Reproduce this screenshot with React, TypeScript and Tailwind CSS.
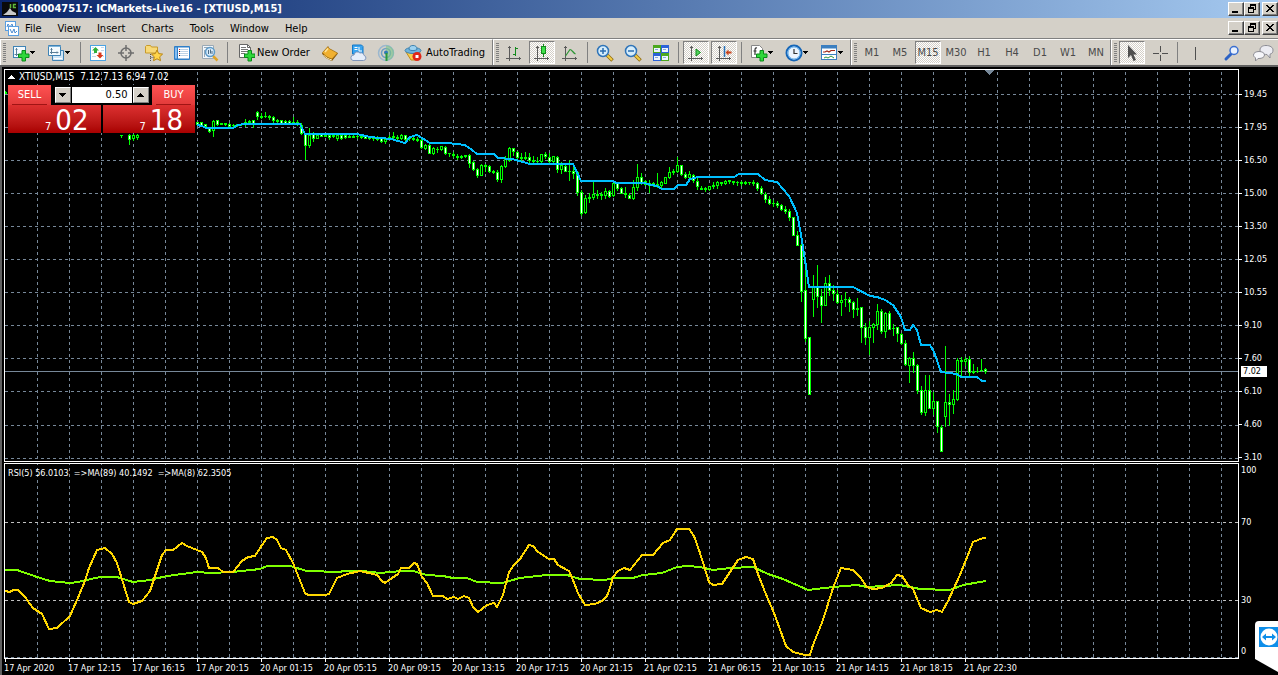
import type { ReactNode } from "react";

type Point = [number, number];
// x, high, body top, body bottom, low, rising
type Candle = [number, number, number, number, number, 0 | 1];

const candles: Candle[] = [
  [5, 91, 92, 93, 93, 0], [121, 135, 135, 135, 137, 0], [129, 134, 135, 139, 144, 0], [133, 134, 135, 138, 140, 1],
  [137, 134, 135, 137, 139, 1],
  [197, 122, 122, 124, 124, 0], [201, 122, 122, 125, 125, 0], [205, 124, 124, 126, 127, 0], [209, 127, 128, 131, 132, 0],
  [213, 120, 121, 130, 136, 1], [217, 120, 120, 124, 125, 0], [221, 123, 123, 124, 124, 0], [225, 123, 123, 124, 125, 0],
  [229, 123, 124, 126, 127, 0], [233, 124, 125, 125, 127, 0], [237, 124, 124, 125, 126, 0], [241, 123, 124, 124, 125, 0],
  [245, 119, 122, 124, 126, 1], [249, 120, 121, 122, 124, 0], [253, 120, 120, 123, 127, 0], [257, 111, 112, 116, 119, 0],
  [261, 113, 116, 117, 118, 0], [265, 112, 116, 116, 117, 0], [269, 115, 116, 117, 119, 0], [273, 116, 117, 120, 122, 0],
  [277, 119, 120, 121, 122, 0], [281, 120, 120, 123, 124, 0], [285, 120, 121, 124, 124, 0], [289, 120, 121, 123, 124, 0],
  [293, 117, 122, 123, 124, 0], [297, 120, 122, 124, 125, 0], [301, 123, 125, 133, 134, 0], [305, 133, 134, 145, 159, 0],
  [309, 128, 135, 145, 147, 1], [313, 132, 134, 138, 141, 0], [317, 135, 135, 138, 138, 1], [321, 133, 134, 136, 136, 0],
  [325, 134, 135, 136, 136, 0], [329, 135, 135, 137, 139, 0], [333, 134, 135, 136, 137, 0], [337, 135, 135, 138, 140, 1],
  [341, 134, 135, 138, 139, 0], [345, 135, 135, 137, 138, 0], [349, 134, 136, 137, 137, 0], [353, 135, 136, 137, 137, 0],
  [357, 135, 136, 136, 138, 0], [361, 136, 136, 137, 138, 0], [365, 135, 136, 138, 138, 0], [369, 137, 137, 138, 139, 0],
  [373, 137, 138, 138, 140, 0], [377, 136, 138, 139, 140, 0], [381, 137, 138, 141, 142, 0], [385, 138, 139, 141, 143, 1],
  [389, 135, 137, 138, 139, 0], [393, 132, 136, 137, 139, 0], [397, 135, 137, 138, 139, 0], [401, 134, 135, 138, 139, 1],
  [405, 135, 135, 139, 140, 0], [409, 137, 138, 138, 140, 0], [413, 137, 138, 139, 140, 0], [417, 137, 139, 140, 141, 0],
  [421, 138, 140, 147, 148, 0], [425, 144, 145, 148, 149, 1], [429, 144, 145, 153, 153, 0], [433, 147, 148, 153, 154, 1],
  [437, 147, 149, 149, 152, 0], [441, 146, 146, 149, 150, 1], [445, 146, 147, 153, 154, 0], [449, 153, 153, 153, 156, 0],
  [453, 152, 154, 155, 157, 0], [457, 154, 156, 157, 159, 0], [461, 155, 156, 157, 158, 0], [465, 155, 155, 156, 157, 0],
  [469, 154, 155, 163, 167, 0], [473, 161, 162, 169, 170, 0], [477, 168, 169, 175, 177, 0], [481, 164, 165, 175, 175, 1],
  [485, 164, 165, 166, 171, 0], [489, 165, 166, 171, 172, 0], [493, 170, 171, 172, 173, 0], [497, 170, 172, 179, 181, 0],
  [501, 165, 166, 179, 182, 1], [505, 156, 159, 166, 167, 1], [509, 147, 148, 160, 161, 1], [513, 148, 148, 151, 155, 0],
  [517, 151, 152, 157, 159, 0], [521, 153, 157, 158, 160, 0], [525, 152, 157, 158, 159, 0], [529, 153, 157, 160, 162, 0],
  [533, 156, 160, 161, 162, 0], [537, 157, 161, 161, 163, 0], [541, 154, 154, 161, 162, 1], [545, 152, 154, 156, 158, 0],
  [549, 153, 157, 161, 162, 0], [553, 156, 156, 161, 162, 1], [557, 156, 157, 169, 172, 0], [561, 162, 165, 169, 173, 1],
  [565, 164, 166, 171, 171, 0], [569, 160, 171, 171, 180, 0], [573, 166, 171, 173, 178, 0], [577, 171, 172, 192, 195, 0],
  [581, 190, 192, 213, 215, 0], [585, 195, 198, 212, 213, 1], [589, 193, 197, 198, 202, 0], [593, 181, 194, 197, 199, 1],
  [597, 190, 194, 195, 198, 0], [601, 192, 194, 195, 199, 0], [605, 188, 191, 195, 198, 1], [609, 190, 191, 196, 197, 0],
  [613, 183, 183, 195, 196, 1], [617, 182, 183, 188, 190, 0], [621, 187, 188, 193, 193, 0], [625, 187, 193, 194, 197, 0],
  [629, 193, 195, 198, 198, 0], [633, 180, 187, 198, 199, 1], [637, 164, 177, 187, 190, 1], [641, 173, 177, 182, 184, 0],
  [645, 180, 181, 184, 185, 0], [649, 180, 183, 185, 192, 0], [653, 182, 183, 184, 186, 0], [657, 173, 184, 185, 187, 0],
  [661, 181, 182, 185, 187, 1], [665, 177, 177, 183, 183, 1], [669, 167, 172, 177, 178, 1], [673, 169, 171, 172, 174, 0],
  [677, 157, 165, 171, 172, 1], [681, 165, 165, 174, 175, 0], [685, 172, 174, 177, 178, 0], [689, 171, 174, 177, 178, 1],
  [693, 174, 175, 180, 182, 0], [697, 177, 181, 186, 189, 0], [701, 186, 188, 189, 189, 0], [705, 187, 188, 189, 191, 0],
  [709, 186, 186, 189, 190, 1], [713, 182, 185, 186, 188, 0], [717, 181, 182, 185, 188, 1], [721, 182, 182, 183, 185, 0],
  [725, 180, 181, 183, 184, 1], [729, 180, 180, 181, 183, 0], [733, 181, 181, 182, 184, 0], [737, 181, 182, 182, 185, 0],
  [741, 181, 182, 183, 185, 0], [745, 181, 182, 183, 184, 0], [749, 182, 182, 182, 184, 0], [753, 180, 182, 183, 185, 0],
  [757, 182, 183, 188, 190, 0], [761, 186, 188, 193, 194, 0], [765, 192, 194, 199, 202, 0], [769, 196, 199, 203, 204, 0],
  [773, 200, 203, 203, 206, 0], [777, 201, 203, 205, 207, 0], [781, 204, 205, 209, 210, 0], [785, 206, 209, 211, 213, 0],
  [789, 209, 211, 217, 220, 0], [793, 217, 217, 235, 235, 0], [797, 231, 235, 245, 245, 0], [801, 244, 245, 291, 301, 0],
  [805, 266, 290, 338, 341, 0], [809, 337, 337, 394, 394, 0], [813, 275, 287, 299, 316, 1], [817, 265, 287, 296, 307, 0],
  [821, 289, 296, 305, 322, 0], [825, 277, 283, 305, 305, 1], [829, 275, 283, 290, 295, 0], [833, 285, 290, 293, 300, 0],
  [837, 290, 294, 302, 303, 0], [841, 295, 300, 302, 315, 1], [845, 292, 299, 299, 306, 0], [849, 297, 299, 302, 311, 0],
  [853, 301, 302, 309, 317, 0], [857, 298, 308, 309, 315, 0], [861, 307, 307, 327, 342, 0], [865, 323, 327, 337, 344, 0],
  [869, 321, 327, 337, 354, 1], [873, 323, 324, 327, 342, 1], [877, 304, 311, 324, 329, 1], [881, 309, 311, 331, 333, 0],
  [885, 312, 313, 331, 337, 1], [889, 311, 313, 329, 329, 0], [893, 324, 328, 328, 335, 0], [897, 327, 327, 333, 341, 0],
  [901, 333, 334, 343, 344, 0], [905, 340, 343, 364, 365, 0], [909, 357, 358, 365, 382, 1], [913, 352, 358, 365, 372, 0],
  [917, 364, 365, 390, 393, 0], [921, 386, 390, 412, 414, 0], [925, 375, 390, 412, 415, 1], [929, 375, 390, 408, 408, 0],
  [933, 392, 401, 408, 414, 1], [937, 401, 401, 426, 432, 0], [941, 425, 427, 451, 451, 0], [945, 346, 402, 416, 426, 1],
  [949, 394, 402, 404, 425, 0], [953, 390, 399, 404, 413, 1], [957, 358, 360, 399, 400, 1], [961, 357, 360, 361, 375, 0],
  [965, 357, 359, 361, 365, 1], [969, 356, 359, 372, 376, 0], [973, 364, 371, 372, 373, 0], [977, 367, 371, 371, 372, 0],
  [981, 359, 370, 370, 371, 0], [985, 368, 369, 371, 373, 0],
];

const averageLine: Point[] = [
  [197, 125], [202, 126], [206, 128], [233, 128], [238, 125], [244, 124], [300, 124], [305, 134], [357, 134], [370, 137],
  [391, 139], [405, 143], [410, 137], [417, 135], [430, 143], [447, 143], [465, 145], [472, 150], [477, 154], [494, 154],
  [498, 158], [512, 159], [523, 162], [530, 164], [573, 164], [581, 181], [613, 181], [616, 183], [645, 183], [647, 184],
  [657, 186], [662, 189], [674, 189], [678, 185], [686, 185], [690, 179], [698, 177], [734, 177], [739, 174], [758, 174],
  [765, 180], [777, 182], [789, 196], [797, 213], [801, 235], [805, 260], [809, 287], [853, 287], [870, 296], [877, 297],
  [885, 300], [893, 305], [901, 317], [905, 330], [910, 330], [913, 325], [917, 330], [921, 345], [930, 345], [934, 352],
  [941, 372], [957, 374], [961, 377], [977, 377], [982, 381], [986, 381],
];

const slowRsi: Point[] = [
  [5, 570], [17, 570], [37, 577], [50, 581], [70, 583], [78, 582], [100, 577], [117, 577], [133, 582], [150, 580],
  [167, 576], [197, 572], [210, 573], [233, 572], [260, 569], [267, 566], [290, 566], [307, 571], [340, 572], [343, 571],
  [363, 571], [380, 573], [390, 572], [403, 571], [413, 571], [427, 575], [443, 576], [453, 578], [467, 578], [477, 582],
  [502, 583], [520, 578], [547, 575], [567, 575], [580, 579], [605, 580], [613, 578], [633, 578], [643, 575], [662, 573],
  [677, 567], [687, 566], [700, 567], [713, 570], [730, 568], [753, 567], [768, 574], [783, 579], [808, 590], [833, 587],
  [857, 585], [867, 587], [883, 586], [900, 585], [920, 589], [950, 590], [963, 585], [986, 581],
];

const fastRsi: Point[] = [
  [5, 591], [10, 592], [13, 590], [18, 590], [25, 597], [33, 608], [42, 614], [49, 629], [57, 628], [70, 616],
  [77, 600], [85, 581], [89, 568], [97, 550], [105, 548], [112, 554], [117, 563], [129, 602], [133, 604], [142, 601],
  [150, 591], [157, 570], [162, 555], [166, 550], [173, 550], [182, 543], [187, 546], [202, 552], [206, 558], [209, 568],
  [218, 568], [223, 572], [233, 572], [242, 561], [248, 557], [255, 556], [262, 545], [267, 538], [273, 537], [277, 540],
  [281, 548], [286, 550], [293, 563], [305, 593], [308, 595], [325, 595], [329, 594], [337, 578], [347, 574], [360, 571],
  [377, 575], [382, 581], [385, 583], [392, 578], [398, 574], [401, 568], [409, 568], [414, 563], [417, 564], [422, 577],
  [427, 583], [433, 596], [443, 596], [447, 599], [454, 597], [458, 599], [464, 596], [469, 598], [473, 607], [478, 612],
  [487, 605], [494, 603], [497, 607], [503, 595], [509, 572], [514, 565], [520, 559], [529, 545], [533, 546], [538, 552],
  [549, 559], [554, 559], [558, 565], [569, 571], [573, 580], [578, 593], [585, 605], [595, 604], [602, 601], [607, 596],
  [610, 588], [613, 577], [618, 571], [624, 568], [630, 570], [642, 555], [653, 555], [663, 543], [670, 540], [677, 529],
  [689, 529], [694, 536], [700, 553], [709, 582], [713, 585], [722, 584], [738, 560], [746, 557], [753, 559], [758, 574],
  [765, 592], [774, 613], [786, 646], [793, 652], [805, 655], [810, 655], [813, 645], [823, 620], [833, 588], [841, 568],
  [853, 570], [860, 577], [867, 587], [873, 589], [882, 588], [891, 583], [897, 575], [902, 576], [908, 585], [913, 589],
  [921, 608], [930, 612], [937, 610], [942, 612], [948, 601], [960, 575], [973, 542], [983, 538], [986, 538],
];

const priceRows = [94, 127, 160, 193, 226, 259, 292, 325, 358, 391, 425, 458];
const prices = ["19.45", "17.95", "16.50", "15.00", "13.50", "12.05", "10.55", "9.10", "7.60", "6.10", "4.60", "3.10"];
const gridColumns = Array.from({ length: 60 }, (_, i) => 37 + i * 32);
const times = [
  "17 Apr 2020", "17 Apr 12:15", "17 Apr 16:15", "17 Apr 20:15", "20 Apr 01:15", "20 Apr 05:15", "20 Apr 09:15", "20 Apr 13:15",
  "20 Apr 17:15", "20 Apr 21:15", "21 Apr 02:15", "21 Apr 06:15", "21 Apr 10:15", "21 Apr 14:15", "21 Apr 18:15", "21 Apr 22:30",
];
const menus = ["File", "View", "Insert", "Charts", "Tools", "Window", "Help"];
const periods = ["M1", "M5", "M15", "M30", "H1", "H4", "D1", "W1", "MN"];

const toPoints = (points: Point[]) => points.map((p) => p.join(",")).join(" ");

/* ---------- Icons ---------- */

function Icon({ children, crisp = false }: { children: ReactNode; crisp?: boolean }) {
  return (
    <svg
      viewBox="0 0 18 18"
      className="h-[18px] w-[18px] shrink-0"
      fill="none"
      shapeRendering={crisp ? "crispEdges" : undefined}
      aria-hidden="true"
    >
      {children}
    </svg>
  );
}

function GreenPlus({ x, y }: { x: number; y: number }) {
  return (
    <path
      transform={`translate(${x} ${y})`}
      d="M4 .5h3.500V4H11v3.500H7.500V11H4V7.500H.5V4H4z"
      fill="#2fd83a"
      stroke="#0b8a1a"
    />
  );
}

function NewChartIcon() {
  return (
    <Icon>
      <rect x="1.500" y="2.500" width="12" height="11" fill="#f4fbff" stroke="#3f83b5" />
      <path d="M4.500 4v8M2.500 10.500h9M3.500 5.500l1-1 1 1M10.500 9.500l1 1" stroke="#5b7f98" />
      <GreenPlus x={6} y={6} />
    </Icon>
  );
}

function ProfilesIcon() {
  return (
    <Icon>
      <path d="M5.500 6.500h11v10h-11z" fill="#cfe6f7" stroke="#3f83b5" />
      <path d="M1.500 1.500h12v10h-12z" fill="#f4fbff" stroke="#3f83b5" />
      <path d="M1.500 2.500h12" stroke="#7db4dc" />
      <path d="M4.500 4v6M3 8.500h8M10 7.500l1 1-1 1M3.500 5.500l1-1 1 1" stroke="#5b7f98" />
      <path d="M7 14.500h8" stroke="#fff" />
    </Icon>
  );
}

function MarketWatchIcon() {
  return (
    <Icon>
      <rect x="1.500" y="1.500" width="15" height="15" fill="#fff" stroke="#4ba3e3" />
      <path d="M3 3.500h2M12 3.500h3M12 6.500h3M3 9.500h3M3 12.500h4M14 12.500h1" stroke="#c5d8e8" />
      <path d="M6.500 3l3.500 3.500H8V9H5V6.500H3z" fill="#2fae3a" />
      <path d="M11 14.500L7.500 11h2V8.500h3V11h2z" fill="#d9391c" />
    </Icon>
  );
}

function DataWindowIcon() {
  return (
    <Icon>
      <circle cx="9" cy="9" r="5" stroke="#6e6e6e" strokeWidth="1.500" />
      <path d="M9 1v6M9 11v6M1 9h6M11 9h6" stroke="#6e6e6e" strokeWidth="1.500" />
    </Icon>
  );
}

function NavigatorIcon() {
  return (
    <Icon>
      <path d="M.5 2.500l1-1h4l1 1.500h6v6H.5z" fill="#f8d978" stroke="#c79a2b" />
      <path d="M5.500 10v7M5.500 13.500h4" stroke="#555" strokeDasharray="1 1" />
      <path d="M12 6l1.700 3.600 3.900.5-2.900 2.700.8 3.900-3.500-1.900-3.500 1.900.8-3.900-2.900-2.700 3.900-.5z" fill="#ffd54a" stroke="#b98512" />
    </Icon>
  );
}

function TerminalIcon() {
  return (
    <Icon>
      <rect x="1" y="2" width="16" height="14" rx="1" fill="#2f7fc8" />
      <path d="M5 3.500h11v11H5z" fill="#fff" />
      <path d="M2 3.500h2v11H2z" fill="#86bdf0" />
      <path d="M7 5.500h8M7 7.500h8M7 9.500h8M7 11.500h8" stroke="#bcd2e6" />
      <path d="M6 5.500h1M6 9.500h1" stroke="#d33" />
      <path d="M6 7.500h1M6 11.500h1" stroke="#222" />
    </Icon>
  );
}

function TesterIcon() {
  return (
    <Icon>
      <path d="M1.500 1.500h11v13h-11z" fill="#f2f7fb" stroke="#9aa9b5" />
      <path d="M3 3.500h8M3.500 6v7" stroke="#9aa9b5" />
      <path d="M12 12l4.500 4.500" stroke="#e0a526" strokeWidth="2.500" />
      <circle cx="9" cy="8" r="4.500" fill="#d7ebfa" stroke="#5f9bc8" strokeWidth="1.500" />
      <path d="M7.500 6v4M9.500 5.500v4M11 7v3" stroke="#4a6b85" />
    </Icon>
  );
}

function NewOrderIcon() {
  return (
    <Icon>
      <path d="M2.500.5h8l3 3v10h-11z" fill="#fff" stroke="#666" />
      <path d="M10.500.5v3h3" stroke="#666" />
      <path d="M4 3.500h5M4 5.500h7M4 7.500h7M4 9.500h4" stroke="#777" />
      <GreenPlus x={7} y={6} />
    </Icon>
  );
}

function BookIcon() {
  return (
    <Icon>
      <path d="M1 9.500L7 2.500c.5 1.500 1.500 2.500 3 3l7 4-6 7.500C7 15.500 3 13.500 1 9.500z" fill="#8a5a0a" />
      <path d="M1.500 8.500L7 2.500c.5 1.500 1.500 2.500 3 3l6.500 3.500-5.500 6C7 14 3.500 12 1.500 8.500z" fill="#f0b030" stroke="#9a6a10" strokeWidth=".6" />
      <path d="M2.500 11c2.500 3 5 4 8.500 5" stroke="#fff0b8" />
      <path d="M7 4.500L4 8" stroke="#ffe49a" strokeWidth="1.500" />
    </Icon>
  );
}

function CloudIcon() {
  return (
    <Icon>
      <path d="M3.500 1h9l1.500 1.500V10H3.500z" fill="#3aa5f0" stroke="#1379c8" />
      <path d="M5.500 3.500h3M5.500 5.500h3M10 3v4h3" stroke="#fff" />
      <path d="M4 16.500h10.500a2.600 2.600 0 0 0 .5-5.100A3 3 0 0 0 11 9a3.500 3.500 0 0 0-6 2 2.800 2.800 0 0 0-1 5.500z" fill="#e6eefa" stroke="#7f95bb" />
    </Icon>
  );
}

function SignalIcon() {
  return (
    <Icon>
      <circle cx="9" cy="9" r="7.500" stroke="#9ab7cf" strokeWidth="1.500" />
      <circle cx="9" cy="9" r="4.500" stroke="#6f9fc4" strokeWidth="1.500" />
      <path d="M9 1.500a7.500 7.500 0 0 1 1 15L9 9z" fill="#7cc48a" fillOpacity=".6" />
      <circle cx="9" cy="8.500" r="2" fill="#2f7ab8" />
      <path d="M9.500 9v8" stroke="#2a9a3c" strokeWidth="2" />
    </Icon>
  );
}

function AutoTradingIcon() {
  return (
    <Icon>
      <path d="M2 8h14l-3 8H7z" fill="#f7cf4c" stroke="#c08a18" />
      <ellipse cx="9" cy="6.500" rx="8" ry="3" fill="#6fb4dd" stroke="#3d82b0" />
      <path d="M5 5.500C5 2.500 6.500 1.500 9 1.500s4 1 4 4c-2 1.500-6 1.500-8 0z" fill="#9dd2f0" stroke="#3d82b0" />
      <circle cx="13" cy="12.500" r="4.500" fill="#e02818" />
      <path d="M11.500 11h3v3h-3z" fill="#fff" />
    </Icon>
  );
}

function Axes() {
  return <path d="M4.500 2v15M1 14.500h15M3 3.500h3M14.500 13v3" stroke="#5a5a5a" />;
}

function BarsIcon() {
  return (
    <Icon crisp>
      <Axes />
      <path d="M10.500 3v9M8 10.500h2M11 4.500h2" stroke="#138a1c" />
    </Icon>
  );
}

function CandlesIcon() {
  return (
    <Icon crisp>
      <Axes />
      <path d="M10.500 0v13" stroke="#138a1c" />
      <rect x="8.500" y="2.500" width="4" height="7" fill="#3fe04a" stroke="#138a1c" />
    </Icon>
  );
}

function LineIcon() {
  return (
    <Icon>
      <Axes />
      <path d="M4.500 12L9 5.500c2 0 3 3.500 5.500 4.500" stroke="#2d9636" strokeWidth="1.200" />
    </Icon>
  );
}

function ZoomIcon({ plus = false }: { plus?: boolean }) {
  return (
    <Icon>
      <path d="M11 11l5.500 5.500" stroke="#8f6a12" strokeWidth="3.500" />
      <path d="M11 11l5 5" stroke="#f3cc42" strokeWidth="2" />
      <circle cx="7" cy="7" r="5.500" fill="#d6edfb" stroke="#2f74b8" strokeWidth="1.500" />
      <path d={plus ? "M4 7h6M7 4v6" : "M4 7h6"} stroke="#2a6cb0" strokeWidth="1.500" />
    </Icon>
  );
}

function TileIcon() {
  return (
    <Icon crisp>
      <path d="M1 1h8v8H1z" fill="#4ba81e" />
      <path d="M9 1h8v8H9z" fill="#2b62d9" />
      <path d="M1 9h8v8H1z" fill="#2b62d9" />
      <path d="M9 9h8v8H9z" fill="#4ba81e" />
      <path d="M2 4h6v4H2zM10 4h6v4h-6zM2 12h6v4H2zM10 12h6v4h-6z" fill="#eef6ff" />
      <path d="M3 5.500h3M11 5.500h3M3 13.500h3M11 13.500h3" stroke="#8aa9d8" />
    </Icon>
  );
}

function AutoScrollIcon() {
  return (
    <Icon>
      <Axes />
      <path d="M9 5v7l4.500-3.500z" fill="#4fd45a" stroke="#138a1c" />
    </Icon>
  );
}

function ShiftIcon() {
  return (
    <Icon>
      <Axes />
      <path d="M9.500 2v11" stroke="#2a72b8" strokeWidth="1.500" />
      <path d="M10.500 8.500l3-3v2h3v2h-3v2z" fill="#c8421a" />
    </Icon>
  );
}

function IndicatorsIcon() {
  return (
    <Icon>
      <path d="M1.500 1.500h8l3 3v9h-11z" fill="#fff" stroke="#888" />
      <path d="M7 4c-2-.5-2 1-2 3v4M3.500 7h3" stroke="#333" strokeWidth="1.200" />
      <GreenPlus x={6} y={6} />
    </Icon>
  );
}

function ClockIcon() {
  return (
    <Icon>
      <circle cx="9" cy="9" r="7.500" fill="#eaf4fd" stroke="#1566b8" strokeWidth="2" />
      <circle cx="9" cy="9" r="6" stroke="#6db4ee" />
      <path d="M9 5v4.500h3.500" stroke="#333" strokeWidth="1.200" />
    </Icon>
  );
}

function TemplateIcon() {
  return (
    <Icon>
      <rect x="1.500" y="1.500" width="15" height="14" fill="#fff" stroke="#3b7fc0" />
      <path d="M1.500 3h15" stroke="#3b7fc0" strokeWidth="3" />
      <path d="M3 8h2l2-1 2 1 2-1.500h4" stroke="#a12a1a" strokeWidth="1.200" />
      <path d="M2 10.500h14" stroke="#3b7fc0" />
      <path d="M4 14l2-1 2 1 3-2 3 2" stroke="#2f9a38" />
    </Icon>
  );
}

function PointerIcon() {
  return (
    <Icon>
      <path d="M5 1v13l3-3 2.500 6 2.500-1-2.500-5.500H14z" fill="#4f4f4f" />
    </Icon>
  );
}

function CrossIcon() {
  return (
    <Icon crisp>
      <path d="M9.500 2v6M9.500 11v6M2 9.500h6M11 9.500h6" stroke="#4f4f4f" />
    </Icon>
  );
}

function VerticalLineIcon() {
  return (
    <Icon crisp>
      <path d="M9.500 3v13" stroke="#4f4f4f" />
    </Icon>
  );
}

function SearchIcon() {
  return (
    <Icon>
      <path d="M3 15l5-5" stroke="#2c62c4" strokeWidth="3" strokeLinecap="round" />
      <circle cx="11" cy="6.500" r="4" fill="#e9f1fd" stroke="#3b6fd0" strokeWidth="1.500" />
    </Icon>
  );
}

function ChatIcon() {
  return (
    <svg viewBox="0 0 22 18" className="h-[18px] w-[22px] shrink-0" aria-hidden="true">
      <path d="M14 1.500c4 0 7 1.800 7 4.500s-1 3.500-3 4.200V14l-3-3.500c-4 0-7-1.500-7-4.500s2.500-4.500 6-4.500z" fill="#ececf2" stroke="#8c8c94" />
      <path d="M7 7.500c3 0 5.500 1.300 5.500 3.500S10 14.500 7 14.500H6L3.500 17v-3.200C2 13 1.500 12 1.500 11c0-2.200 2.500-3.500 5.500-3.500z" fill="#f6f6fa" stroke="#8c8c94" />
    </svg>
  );
}

/* ---------- Window chrome ---------- */

function WindowButtons() {
  const box =
    "flex h-[14px] w-4 items-center justify-center border border-t-white border-l-white border-r-[#404040] border-b-[#404040] bg-[#d4d0c8] shadow-[inset_-1px_-1px_0_#808080]";
  return (
    <div className="flex items-center">
      <button type="button" aria-label="Minimize" className={box}>
        <svg viewBox="0 0 12 10" className="h-[10px] w-3" shapeRendering="crispEdges">
          <path d="M2 7h6v2H2z" />
        </svg>
      </button>
      <button type="button" aria-label="Restore" className={box}>
        <svg viewBox="0 0 12 10" className="h-[10px] w-3" shapeRendering="crispEdges">
          <path d="M4 0h6v6H8V5h1V2H5v1H4zM2 3h6v6H2zM3 5v3h4V5z" fillRule="evenodd" />
        </svg>
      </button>
      <button type="button" aria-label="Close" className={`ml-0.5 ${box}`}>
        <svg viewBox="0 0 12 10" className="h-[10px] w-3" shapeRendering="crispEdges">
          <path d="M2 1h2v1h1v1h2V2h1V1h2v1H9v1H8v1H7v1h1v1h1v1h1v1H8V7H7V6H5v1H4v1H2V7h1V6h1V5h1V4H4V3H3V2H2z" />
        </svg>
      </button>
    </div>
  );
}

function TitleBar() {
  return (
    <header className="flex h-[18px] items-center bg-gradient-to-r from-[#0a246a] to-[#a6caf0] pl-0.5">
      <svg viewBox="0 0 16 16" className="h-4 w-4" aria-hidden="true">
        <path d="M0 1h16v14H0z" fill="#0a0a0a" />
        <path d="M1 14l4-3 3-4 2 3 4 2v2z" fill="#c9c9c9" />
        <path d="M8.500 3v4M14 3.500h-2.500v3H14" fill="none" stroke="#5fb63a" strokeWidth="1.500" />
      </svg>
      <h1 className="flex-1 pl-0.5 text-[11px] leading-4 font-bold whitespace-nowrap text-white">
        1600047517: ICMarkets-Live16 - [XTIUSD,M15]
      </h1>
      <WindowButtons />
    </header>
  );
}

function MenuBar() {
  return (
    <nav className="flex h-[21px] items-center border-b border-[#808080] pl-1">
      <svg viewBox="0 0 15 15" className="h-[15px] w-[15px]" fill="none" aria-hidden="true">
        <rect x="1.500" y=".5" width="10" height="9" fill="#fff" stroke="#5a9ee0" />
        <path d="M3 6l1-3 2 3 2-3 1 3" stroke="#4a8ad0" />
        <rect x="4.500" y="5.500" width="10" height="9" fill="#fff" stroke="#5a9ee0" />
        <path d="M6 8l2 4 2-4 1 4 2-2" stroke="#4a8ad0" />
      </svg>
      <div className="flex flex-1 pt-px">
        {menus.map((menu) => (
          <button key={menu} type="button" className="pr-2.5 pl-1.5 text-[11px] leading-4">
            {menu}
          </button>
        ))}
      </div>
      <WindowButtons />
    </nav>
  );
}

function ToolButton({
  label,
  pressed = false,
  children,
}: {
  label: string;
  pressed?: boolean;
  children: ReactNode;
}) {
  return (
    <button
      type="button"
      aria-label={label}
      aria-pressed={pressed}
      className={`mx-px flex h-[23px] w-[26px] shrink-0 items-center justify-center border text-[11px] text-[#4a4a4a] ${
        pressed
          ? "border-t-[#808080] border-r-white border-b-white border-l-[#808080] bg-[repeating-conic-gradient(#fff_0_25%,#d4d0c8_0_50%)] bg-[length:2px_2px]"
          : "border-transparent"
      }`}
    >
      {children}
    </button>
  );
}

function DropButton({ label, children }: { label: string; children: ReactNode }) {
  return (
    <button type="button" aria-label={label} aria-haspopup="menu" className="flex h-[23px] w-[35px] shrink-0 items-center pl-[5px]">
      {children}
      <svg viewBox="0 0 5 3" className="h-[3px] w-[5px]" shapeRendering="crispEdges">
        <path d="M0 0h5v1H4v1H3v1H2V2H1V1H0z" />
      </svg>
    </button>
  );
}

function Grip() {
  return (
    <span className="mr-px ml-0.5 h-[19px] w-[3px] shrink-0 bg-[repeating-linear-gradient(#808080_0_1px,#d4d0c8_1px_2px)]" />
  );
}

function Separator() {
  return <span className="mx-[3px] h-[21px] w-px shrink-0 bg-[#808080]" />;
}

function Band({ children, grow = false }: { children: ReactNode; grow?: boolean }) {
  return (
    <div
      className={`flex items-center border-t border-l border-white ${
        grow ? "flex-1" : "shrink-0 border-r border-r-[#808080]"
      }`}
    >
      <Grip />
      {children}
    </div>
  );
}

function Toolbar() {
  return (
    <div className="flex h-[26px]" role="toolbar">
      <Band>
        <DropButton label="New chart"><NewChartIcon /></DropButton>
        <DropButton label="Profiles"><ProfilesIcon /></DropButton>
        <Separator />
        <ToolButton label="Market Watch"><MarketWatchIcon /></ToolButton>
        <ToolButton label="Data Window"><DataWindowIcon /></ToolButton>
        <ToolButton label="Navigator"><NavigatorIcon /></ToolButton>
        <ToolButton label="Terminal"><TerminalIcon /></ToolButton>
        <ToolButton label="Strategy Tester"><TesterIcon /></ToolButton>
        <Separator />
        <button type="button" className="ml-1.5 flex w-[79px] shrink-0 items-center gap-0.5 text-[11px] whitespace-nowrap">
          <NewOrderIcon />
          <span className="pt-px">New Order</span>
        </button>
        <ToolButton label="MetaEditor"><BookIcon /></ToolButton>
        <ToolButton label="Hosting"><CloudIcon /></ToolButton>
        <ToolButton label="Signals"><SignalIcon /></ToolButton>
        <button type="button" className="ml-1 flex w-[88px] shrink-0 items-center gap-1 text-[11px] whitespace-nowrap">
          <AutoTradingIcon />
          <span className="pt-px">AutoTrading</span>
        </button>
      </Band>
      <Band>
        <ToolButton label="Bar chart"><BarsIcon /></ToolButton>
        <ToolButton label="Candlesticks" pressed><CandlesIcon /></ToolButton>
        <ToolButton label="Line chart"><LineIcon /></ToolButton>
        <Separator />
        <ToolButton label="Zoom in"><ZoomIcon plus /></ToolButton>
        <ToolButton label="Zoom out"><ZoomIcon /></ToolButton>
        <ToolButton label="Tile windows"><TileIcon /></ToolButton>
        <Separator />
        <ToolButton label="Auto scroll" pressed><AutoScrollIcon /></ToolButton>
        <ToolButton label="Chart shift" pressed><ShiftIcon /></ToolButton>
        <Separator />
        <DropButton label="Indicators"><IndicatorsIcon /></DropButton>
        <DropButton label="Periods"><ClockIcon /></DropButton>
        <DropButton label="Templates"><TemplateIcon /></DropButton>
      </Band>
      <Band>
        {periods.map((period) => (
          <ToolButton key={period} label={period} pressed={period === "M15"}>
            <span className="pt-0.5">{period}</span>
          </ToolButton>
        ))}
      </Band>
      <Band grow>
        <ToolButton label="Cursor" pressed><PointerIcon /></ToolButton>
        <ToolButton label="Crosshair"><CrossIcon /></ToolButton>
        <Separator />
        <ToolButton label="Vertical line"><VerticalLineIcon /></ToolButton>
        <span className="flex-1" />
        <ToolButton label="Search"><SearchIcon /></ToolButton>
        <button type="button" aria-label="Community" className="mr-1 ml-1.5 shrink-0"><ChatIcon /></button>
      </Band>
    </div>
  );
}

/* ---------- Chart ---------- */

function GridLines({ rows, levels = [] }: { rows: number[]; levels?: number[] }) {
  return (
    <g strokeDasharray="3 3" stroke="#778899">
      {gridColumns.map((x) => (
        <line key={x} x1={x + 0.5} x2={x + 0.5} y1="0" y2="700" />
      ))}
      {rows.map((y) => (
        <line key={y} x1="5" x2="3000" y1={y + 0.5} y2={y + 0.5} />
      ))}
      {levels.map((y) => (
        <line key={y} x1="5" x2="3000" y1={y + 0.5} y2={y + 0.5} stroke="#c0c0c0" />
      ))}
    </g>
  );
}

function CandleShape({ candle }: { candle: Candle }) {
  const [x, high, top, bottom, low, rising] = candle;
  return (
    <g>
      <rect x={x} y={high} width="1" height={low - high + 1} fill="#00ff00" />
      <rect x={x - 1} y={top} width="3" height={bottom - top + 1} fill="#00ff00" />
      {bottom - top > 1 && (
        <rect x={x} y={top + 1} width="1" height={bottom - top - 1} fill={rising ? "#000000" : "#ffffff"} />
      )}
    </g>
  );
}

function TradePanel() {
  const spin = "flex h-4 w-4 items-center justify-center border border-t-white border-l-white border-[#808080] bg-[#d4d0c8]";
  const side = "h-5 w-[43px] bg-gradient-to-b from-[#ff5252] to-[#e23a3a] px-1 text-[11px] leading-[19px] text-white";
  const price = "flex h-7 flex-1 items-end justify-end bg-gradient-to-b from-[#dd3030] to-[#a80000] text-white";
  return (
    <div className="absolute top-[15px] left-[3px] w-[187px] bg-black">
      <div className="flex justify-between">
        <button type="button" className={side}>
          <span className="block border-b border-[#a01414]">SELL</span>
        </button>
        <div className="flex items-center gap-px">
          <button type="button" aria-label="Decrease volume" className={spin}>
            <svg viewBox="0 0 7 4" className="h-1 w-[7px]" shapeRendering="crispEdges">
              <path d="M0 0h7L3.500 4z" />
            </svg>
          </button>
          <input
            aria-label="Volume"
            defaultValue="0.50"
            className="h-4 w-[60px] bg-white pr-1 text-right text-[11px] leading-4 text-black"
          />
          <button type="button" aria-label="Increase volume" className={spin}>
            <svg viewBox="0 0 7 4" className="h-1 w-[7px]" shapeRendering="crispEdges">
              <path d="M0 4h7L3.500 0z" />
            </svg>
          </button>
        </div>
        <button type="button" className={side}>
          <span className="block border-b border-[#a01414]">BUY</span>
        </button>
      </div>
      <div className="flex gap-0.5">
        <button type="button" aria-label="Sell at 7.02" className={price}>
          <span className="pb-px text-[11px] leading-2.5">7</span>
          <span className="pt-0.5 pr-3 pl-1 text-[29px] leading-[26px]">02</span>
        </button>
        <button type="button" aria-label="Buy at 7.18" className={price}>
          <span className="pb-px text-[11px] leading-2.5">7</span>
          <span className="pt-0.5 pr-3 pl-1 text-[29px] leading-[26px]">18</span>
        </button>
      </div>
    </div>
  );
}

function PricePane() {
  return (
    <section className="flex h-[393px]">
      <div className="relative min-w-0 flex-1 overflow-hidden border border-white">
        <svg className="block h-full w-full" shapeRendering="crispEdges" fill="none" role="img" aria-label="XTIUSD price chart">
          <g transform="translate(-5 -70)">
            <GridLines rows={priceRows} />
            <path d="M985 70h9l-4.500 5z" fill="#778899" />
            <line x1="5" x2="3000" y1="371.5" y2="371.5" stroke="#778899" />
            {candles.map((candle) => (
              <CandleShape key={candle[0]} candle={candle} />
            ))}
            <polyline points={toPoints(averageLine)} stroke="#00bfff" strokeWidth="2" />
          </g>
        </svg>
        <p className="absolute top-px left-[3px] flex items-center gap-1 text-[10px] leading-3 whitespace-pre">
          <svg viewBox="0 0 7 4" className="h-1 w-[7px]" shapeRendering="crispEdges">
            <path d="M0 4h7L3.500 0z" fill="#fff" />
          </svg>
          {"XTIUSD,M15  7.12 7.13 6.94 7.02"}
        </p>
        <TradePanel />
      </div>
      <div className="relative w-[39px] pt-[9px]">
        {prices.map((price) => (
          <div key={price} className="flex h-[33px] items-center gap-0.5">
            <span className="h-px w-[3px] bg-white" />
            {price}
          </div>
        ))}
        <span className="absolute top-[297px] left-0.5 w-[26px] bg-white pl-0.5 leading-[11px] text-black">7.02</span>
      </div>
    </section>
  );
}

function RsiPane() {
  return (
    <section className="mt-px flex h-[196px]">
      <div className="relative min-w-0 flex-1 overflow-hidden border border-white">
        <svg className="block h-full w-full" shapeRendering="crispEdges" fill="none" role="img" aria-label="RSI indicator">
          <g transform="translate(-5 -464)">
            <GridLines rows={[657]} levels={[522, 600]} />
            <polyline points={toPoints(slowRsi)} stroke="#7fff00" strokeWidth="2" />
            <polyline points={toPoints(fastRsi)} stroke="#ffd700" strokeWidth="2" />
          </g>
        </svg>
        <p className="absolute top-[3px] left-[3px] leading-3 whitespace-pre">
          {"RSI(5) 56.0103  =>MA(89) 40.1492  =>MA(8) 62.3505"}
        </p>
      </div>
      <div className="flex w-[39px] flex-col pt-px pl-0.5 leading-3">
        <span>100</span>
        <span className="mt-10">70</span>
        <span className="mt-[66px]">30</span>
        <span className="mt-[39px]">0</span>
      </div>
    </section>
  );
}

function TimeAxis() {
  return (
    <div className="flex h-4 overflow-hidden">
      {times.map((time) => (
        <div key={time} className="w-16 shrink-0 whitespace-nowrap">
          <span className="ml-px block h-[3px] w-px bg-white" />
          <span className="block leading-3">{time}</span>
        </div>
      ))}
    </div>
  );
}

function RemoteTab() {
  return (
    <svg viewBox="0 0 23 54" className="fixed right-0 bottom-0 h-[54px] w-[23px]" role="img" aria-label="Remote session">
      <path d="M0 4a4 4 0 0 1 4-4h19v51L0 38z" fill="#fff" />
      <path d="M4 6h19v20H4z" fill="#0e8ee9" />
      <circle cx="14" cy="16" r="8.500" fill="#fff" />
      <path d="M7 16l4-3.500v2.500h6v-2.500l4 3.500-4 3.500v-2.500h-6v2.500z" fill="#0e8ee9" />
    </svg>
  );
}

export default function App() {
  return (
    <div className="min-h-screen bg-black font-['DejaVu_Sans_Condensed','DejaVu_Sans',sans-serif] text-black">
      <div className="bg-[#d4d0c8]">
        <TitleBar />
        <MenuBar />
        <Toolbar />
      </div>
      <main className="border-t-2 border-l-2 border-[#606060] pt-0.5 pl-0.5 text-[9px] text-white">
        <PricePane />
        <RsiPane />
        <TimeAxis />
      </main>
      <RemoteTab />
    </div>
  );
}
